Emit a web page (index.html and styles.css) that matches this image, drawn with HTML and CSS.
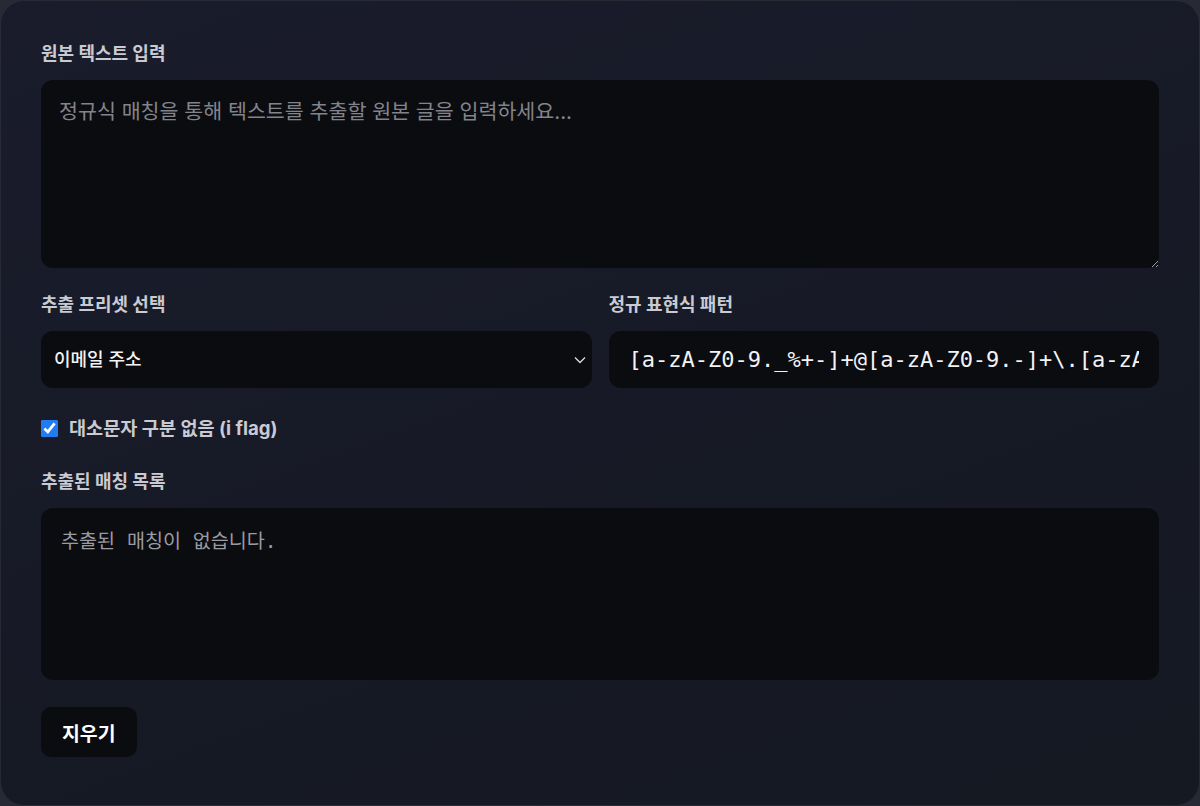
FILE: index.html
```html
<!DOCTYPE html>
<html lang="ko">
  <head>
    <meta charset="UTF-8" />
    <meta name="viewport" content="width=device-width, initial-scale=1.0" />
    <title>정규식 추출기</title>
    <link rel="stylesheet" href="styles.css">
  </head>
  <body>
    <div class="card">
      <!-- Source text -->
      <div class="field">
        <label class="field-label" for="source">원본 텍스트 입력</label>
        <textarea id="source" class="source-input" placeholder="정규식 매칭을 통해 텍스트를 추출할 원본 글을 입력하세요..."></textarea>
      </div>

      <!-- Preset + pattern -->
      <div class="row">
        <div class="field">
          <label class="field-label" for="preset">추출 프리셋 선택</label>
          <div class="select-wrap">
            <select id="preset" class="preset-select">
              <option>이메일 주소</option>
              <option>전화번호</option>
              <option>URL</option>
            </select>
            <svg class="chevron" width="12" height="8" viewBox="0 0 12 8" fill="none">
              <path d="M1 1.5l5 5 5-5" stroke="#d8d8de" stroke-width="1.4" />
            </svg>
          </div>
        </div>
        <div class="field">
          <label class="field-label" for="pattern">정규 표현식 패턴</label>
          <input id="pattern" class="pattern-input" type="text" value="[a-zA-Z0-9._%+-]+@[a-zA-Z0-9.-]+\.[a-zA-Z]{2,}" />
        </div>
      </div>

      <label class="check">
        <input type="checkbox" id="ignoreCase" checked />
        <span>대소문자 구분 없음 (i flag)</span>
      </label>

      <!-- Results -->
      <div class="field results-field">
        <span class="field-label">추출된 매칭 목록</span>
        <pre class="results" id="results">추출된 매칭이 없습니다.</pre>
      </div>

      <div class="actions">
        <button id="clearBtn" class="clear-btn">지우기</button>
      </div>
    </div>
  </body>
</html>
```

FILE: styles.css
```css
* {
  box-sizing: border-box;
}

body {
  margin: 0;
  height: 100vh;
  background-color: #272934;
  font-family: "Inter", "Noto Sans CJK KR", sans-serif;
  color-scheme: dark;
}

.card {
  height: 100vh;
  padding: 40px 40px 0;
  border-radius: 24px;
  border: 1px solid rgba(255, 255, 255, 0.07);
  background: linear-gradient(160deg, #1a1c2c 0%, #171a26 50%, #151922 100%);
  display: flex;
  flex-direction: column;
}

.field {
  display: flex;
  flex-direction: column;
  min-width: 0;
}

.row .field {
  flex: 1;
}

.field-label {
  font-size: 18px;
  font-weight: 700;
  color: #c9cad2;
  line-height: 26px;
  margin-bottom: 13px;
}

.source-input {
  display: block;
  height: 188px;
  padding: 19px 18px;
  border: none;
  border-radius: 12px;
  background-color: #0b0c10;
  color: #e6e6ea;
  font-family: "Inter", "Noto Sans CJK KR", sans-serif;
  font-size: 20.6px;
  line-height: 26px;
  resize: vertical;
  outline: none;
}

.source-input::placeholder {
  color: #83848b;
}

.row {
  display: flex;
  gap: 17px;
  margin-top: 24px;
}

.select-wrap {
  position: relative;
}

.preset-select {
  width: 100%;
  height: 57px;
  padding: 0 40px 0 13px;
  appearance: none;
  border: none;
  border-radius: 12px;
  background-color: #0b0c10;
  color: #f3f3f5;
  font-family: "Inter", "Noto Sans CJK KR", sans-serif;
  font-size: 18px;
  font-weight: 500;
  outline: none;
}

.chevron {
  position: absolute;
  right: 6px;
  top: 25px;
  pointer-events: none;
}

.pattern-input {
  height: 57px;
  padding: 0 20px;
  border: none;
  border-radius: 12px;
  background-color: #0b0c10;
  color: #f3f3f5;
  font-family: "DejaVu Sans Mono", monospace;
  font-size: 22px;
  outline: none;
}

.check {
  display: flex;
  align-items: center;
  gap: 11px;
  margin-top: 27px;
  font-size: 18.6px;
  line-height: 26px;
  font-weight: 700;
  color: #c9cad2;
}

.check input {
  width: 17px;
  height: 17px;
  margin: 0;
  accent-color: #1f7cf2;
}

.results-field {
  margin-top: 28px;
}

.results {
  height: 172px;
  margin: 0;
  padding: 20px 20px;
  border-radius: 12px;
  background-color: #0b0c10;
  color: #9a9ba1;
  font-family: "DejaVu Sans Mono", "Noto Sans CJK KR", monospace;
  font-size: 19.6px;
  line-height: 28px;
}

.actions {
  margin-top: 27px;
}

.clear-btn {
  padding: 0 21px;
  height: 50px;
  border: none;
  border-radius: 10px;
  background-color: #0b0c10;
  color: #ffffff;
  font-family: "Inter", "Noto Sans CJK KR", sans-serif;
  font-size: 19.4px;
  font-weight: 700;
  cursor: pointer;
}

.clear-btn:hover {
  background-color: #16181e;
}
```
